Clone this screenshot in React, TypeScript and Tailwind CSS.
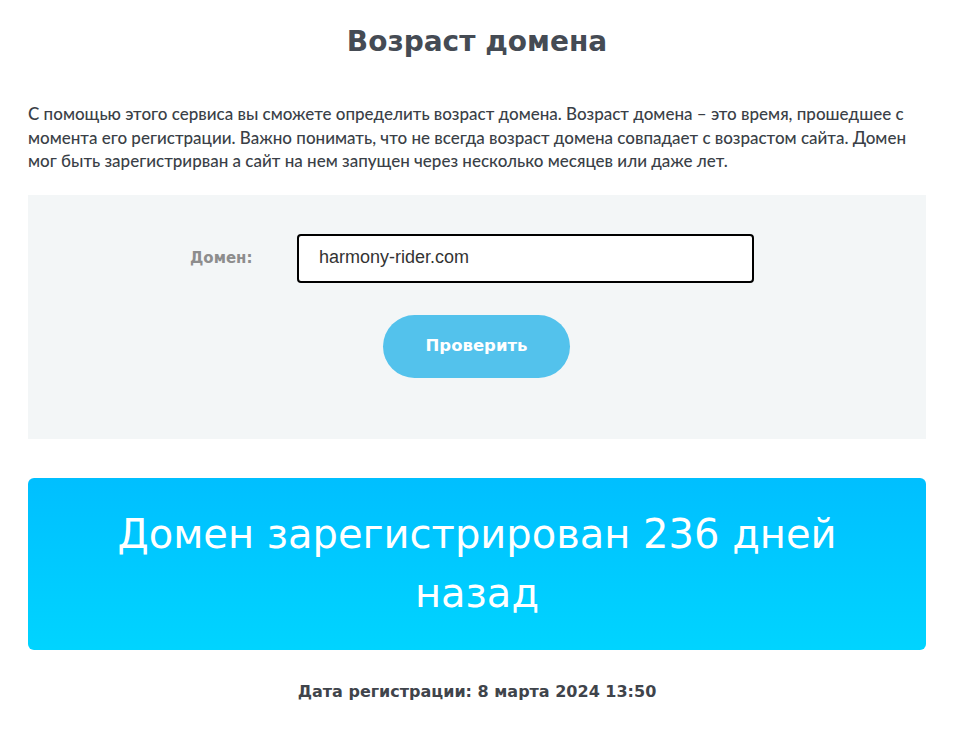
import React from "react";

export default function App() {
  return (
    <div className="min-h-screen bg-white pl-[28px] pr-[48px] pt-[24px] font-['Lato','Open_Sans',sans-serif]">
      <h1 className="text-center text-[28px] leading-[36px] font-bold text-[#454b54] font-['DejaVu_Sans',sans-serif]">
        Возраст домена
      </h1>
      <p className="mt-[42px] text-[17px] leading-[23.5px] text-[#3a3f47] font-medium">
        С помощью этого сервиса вы сможете определить возраст домена. Возраст домена – это время, прошедшее с<br />
        момента его регистрации. Важно понимать, что не всегда возраст домена совпадает с возрастом сайта. Домен<br />
        мог быть зарегистрирван а сайт на нем запущен через несколько месяцев или даже лет.
      </p>
      <div className="mt-[22px] bg-[#f3f6f7] h-[244px] flex flex-col items-start pt-[39px] pl-[162px]">
        <div className="flex items-center">
          <label className="text-[15px] font-bold text-[#8d8d8d] w-[107px] font-['DejaVu_Sans',sans-serif]">Домен:</label>
          <div className="w-[457px] h-[49px] border-2 border-black rounded-[4px] bg-white flex items-center pl-[20px] pb-[2px] text-[18px] text-[#333] font-['Liberation_Sans',Arial,sans-serif]">
            harmony-rider.com
          </div>
        </div>
        <button className="mt-[32px] ml-[193px] w-[187px] h-[63px] rounded-full bg-[#53c2ec] text-white text-[16.5px] font-bold font-['DejaVu_Sans',sans-serif]">
          Проверить
        </button>
      </div>
      <div className="mt-[39px] h-[172px] rounded-[6px] bg-gradient-to-b from-[#00bfff] to-[#00d4ff] flex items-center justify-center text-center text-white text-[40px] leading-[59px] font-normal font-['DejaVu_Sans',sans-serif]">
        <div>
          Домен зарегистрирован 236 дней<br />назад
        </div>
      </div>
      <p className="mt-[30px] text-center text-[16px] font-bold text-[#3f444b] font-['DejaVu_Sans',sans-serif]">
        Дата регистрации: 8 марта 2024 13:50
      </p>
    </div>
  );
}
